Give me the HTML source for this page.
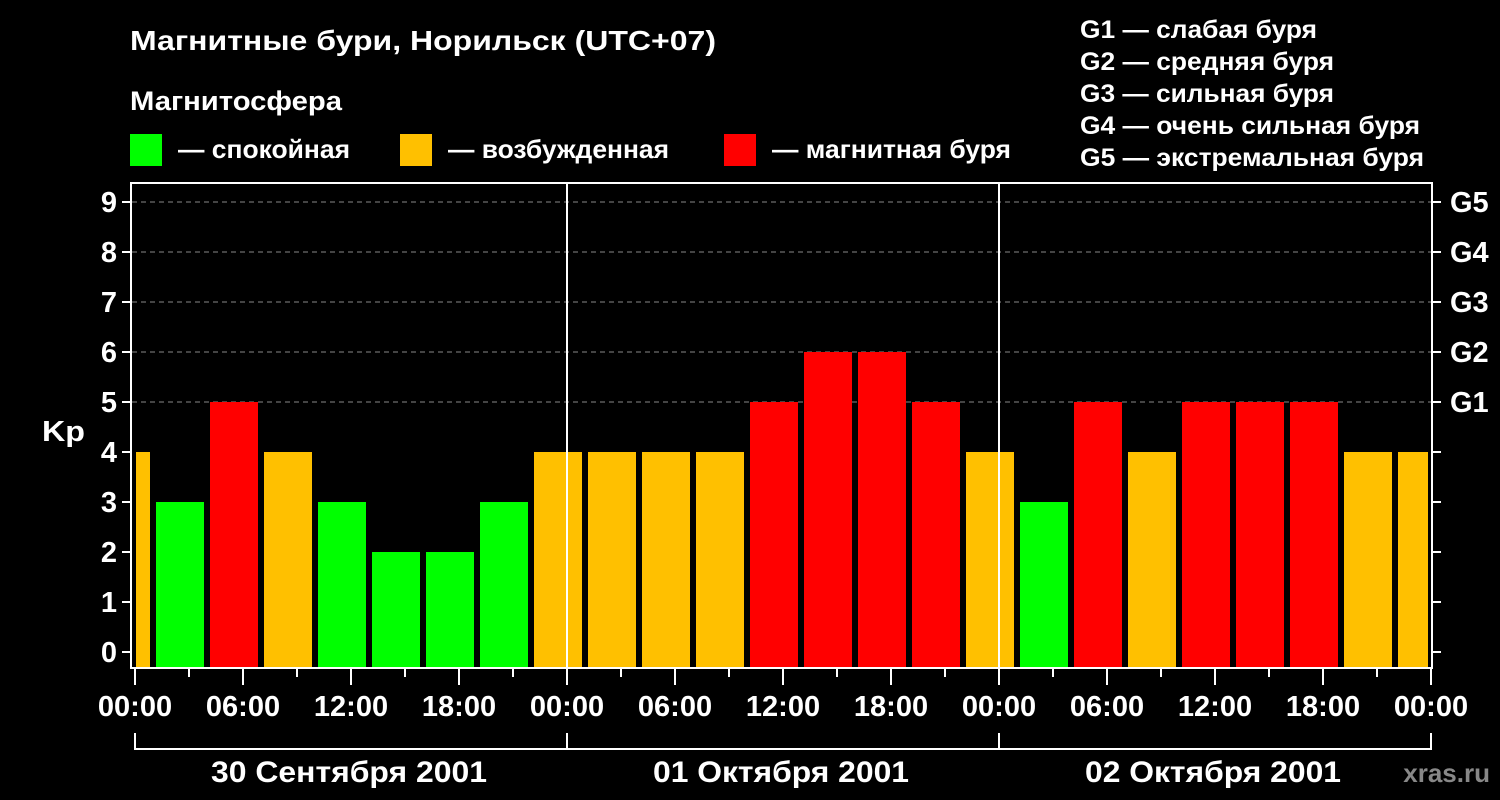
<!DOCTYPE html>
<html><head><meta charset="utf-8"><style>
html,body{margin:0;padding:0;background:#000;}
svg{display:block;font-family:"Liberation Sans",sans-serif;font-weight:bold;}
</style></head><body>
<svg width="1500" height="800" viewBox="0 0 1500 800" xmlns="http://www.w3.org/2000/svg">
<rect width="1500" height="800" fill="#000"/>
<g fill="#fff">
<text x="130" y="50" font-size="28" textLength="586" lengthAdjust="spacingAndGlyphs">Магнитные бури, Норильск (UTC+07)</text>
<text x="130" y="110" font-size="27" textLength="212" lengthAdjust="spacingAndGlyphs">Магнитосфера</text>
<text x="178" y="158" font-size="26" textLength="172" lengthAdjust="spacingAndGlyphs">— спокойная</text>
<text x="448" y="158" font-size="26" textLength="221" lengthAdjust="spacingAndGlyphs">— возбужденная</text>
<text x="772" y="158" font-size="26" textLength="239" lengthAdjust="spacingAndGlyphs">— магнитная буря</text>
<text x="1080" y="38" font-size="25" textLength="237" lengthAdjust="spacingAndGlyphs">G1 — слабая буря</text>
<text x="1080" y="70" font-size="25" textLength="254" lengthAdjust="spacingAndGlyphs">G2 — средняя буря</text>
<text x="1080" y="102" font-size="25" textLength="254" lengthAdjust="spacingAndGlyphs">G3 — сильная буря</text>
<text x="1080" y="134" font-size="25" textLength="340" lengthAdjust="spacingAndGlyphs">G4 — очень сильная буря</text>
<text x="1080" y="166" font-size="25" textLength="344" lengthAdjust="spacingAndGlyphs">G5 — экстремальная буря</text>
</g>
<rect x="130" y="134" width="32" height="32" fill="#00ff00"/>
<rect x="400" y="134" width="32" height="32" fill="#ffc000"/>
<rect x="724" y="134" width="32" height="32" fill="#ff0000"/>
<g stroke="#888" stroke-width="1" stroke-dasharray="5,4">
<line x1="132" y1="202" x2="1432" y2="202"/>
<line x1="132" y1="252" x2="1432" y2="252"/>
<line x1="132" y1="302" x2="1432" y2="302"/>
<line x1="132" y1="352" x2="1432" y2="352"/>
<line x1="132" y1="402" x2="1432" y2="402"/>
</g>
<g>
<rect x="136" y="452" width="14" height="215" fill="#ffc000"/>
<rect x="156" y="502" width="48" height="165" fill="#00ff00"/>
<rect x="210" y="402" width="48" height="265" fill="#ff0000"/>
<rect x="264" y="452" width="48" height="215" fill="#ffc000"/>
<rect x="318" y="502" width="48" height="165" fill="#00ff00"/>
<rect x="372" y="552" width="48" height="115" fill="#00ff00"/>
<rect x="426" y="552" width="48" height="115" fill="#00ff00"/>
<rect x="480" y="502" width="48" height="165" fill="#00ff00"/>
<rect x="534" y="452" width="48" height="215" fill="#ffc000"/>
<rect x="588" y="452" width="48" height="215" fill="#ffc000"/>
<rect x="642" y="452" width="48" height="215" fill="#ffc000"/>
<rect x="696" y="452" width="48" height="215" fill="#ffc000"/>
<rect x="750" y="402" width="48" height="265" fill="#ff0000"/>
<rect x="804" y="352" width="48" height="315" fill="#ff0000"/>
<rect x="858" y="352" width="48" height="315" fill="#ff0000"/>
<rect x="912" y="402" width="48" height="265" fill="#ff0000"/>
<rect x="966" y="452" width="48" height="215" fill="#ffc000"/>
<rect x="1020" y="502" width="48" height="165" fill="#00ff00"/>
<rect x="1074" y="402" width="48" height="265" fill="#ff0000"/>
<rect x="1128" y="452" width="48" height="215" fill="#ffc000"/>
<rect x="1182" y="402" width="48" height="265" fill="#ff0000"/>
<rect x="1236" y="402" width="48" height="265" fill="#ff0000"/>
<rect x="1290" y="402" width="48" height="265" fill="#ff0000"/>
<rect x="1344" y="452" width="48" height="215" fill="#ffc000"/>
<rect x="1398" y="452" width="30" height="215" fill="#ffc000"/>
</g>
<rect x="131" y="183" width="1301" height="485" fill="none" stroke="#fff" stroke-width="2"/>
<line x1="567" y1="183" x2="567" y2="668" stroke="#fff" stroke-width="2"/>
<line x1="999" y1="183" x2="999" y2="668" stroke="#fff" stroke-width="2"/>
<g stroke="#fff" stroke-width="2">
<line x1="122" y1="202" x2="131" y2="202"/><line x1="122" y1="252" x2="131" y2="252"/>
<line x1="122" y1="302" x2="131" y2="302"/><line x1="122" y1="352" x2="131" y2="352"/>
<line x1="122" y1="402" x2="131" y2="402"/><line x1="122" y1="452" x2="131" y2="452"/>
<line x1="122" y1="502" x2="131" y2="502"/><line x1="122" y1="552" x2="131" y2="552"/>
<line x1="122" y1="602" x2="131" y2="602"/><line x1="122" y1="652" x2="131" y2="652"/>
<line x1="1432" y1="202" x2="1441" y2="202"/><line x1="1432" y1="252" x2="1441" y2="252"/>
<line x1="1432" y1="302" x2="1441" y2="302"/><line x1="1432" y1="352" x2="1441" y2="352"/>
<line x1="1432" y1="402" x2="1441" y2="402"/><line x1="1432" y1="452" x2="1441" y2="452"/>
<line x1="1432" y1="502" x2="1441" y2="502"/><line x1="1432" y1="552" x2="1441" y2="552"/>
<line x1="1432" y1="602" x2="1441" y2="602"/><line x1="1432" y1="652" x2="1441" y2="652"/>
</g>
<g fill="#fff" font-size="29" text-anchor="end">
<text x="117" y="212">9</text><text x="117" y="262">8</text><text x="117" y="312">7</text>
<text x="117" y="362">6</text><text x="117" y="412">5</text><text x="117" y="462">4</text>
<text x="117" y="512">3</text><text x="117" y="562">2</text><text x="117" y="612">1</text>
<text x="117" y="662">0</text>
</g>
<text x="42" y="441" fill="#fff" font-size="29" textLength="43" lengthAdjust="spacingAndGlyphs">Kp</text>
<g fill="#fff" font-size="29">
<text x="1450" y="212">G5</text><text x="1450" y="262">G4</text><text x="1450" y="312">G3</text>
<text x="1450" y="362">G2</text><text x="1450" y="412">G1</text>
</g>
<g stroke="#fff" stroke-width="2">
<line x1="135" y1="668" x2="135" y2="685"/><line x1="189" y1="668" x2="189" y2="677"/>
<line x1="243" y1="668" x2="243" y2="685"/><line x1="297" y1="668" x2="297" y2="677"/>
<line x1="351" y1="668" x2="351" y2="685"/><line x1="405" y1="668" x2="405" y2="677"/>
<line x1="459" y1="668" x2="459" y2="685"/><line x1="513" y1="668" x2="513" y2="677"/>
<line x1="567" y1="668" x2="567" y2="685"/><line x1="621" y1="668" x2="621" y2="677"/>
<line x1="675" y1="668" x2="675" y2="685"/><line x1="729" y1="668" x2="729" y2="677"/>
<line x1="783" y1="668" x2="783" y2="685"/><line x1="837" y1="668" x2="837" y2="677"/>
<line x1="891" y1="668" x2="891" y2="685"/><line x1="945" y1="668" x2="945" y2="677"/>
<line x1="999" y1="668" x2="999" y2="685"/><line x1="1053" y1="668" x2="1053" y2="677"/>
<line x1="1107" y1="668" x2="1107" y2="685"/><line x1="1161" y1="668" x2="1161" y2="677"/>
<line x1="1215" y1="668" x2="1215" y2="685"/><line x1="1269" y1="668" x2="1269" y2="677"/>
<line x1="1323" y1="668" x2="1323" y2="685"/><line x1="1377" y1="668" x2="1377" y2="677"/>
<line x1="1431" y1="668" x2="1431" y2="685"/>
<polyline points="135,733 135,749 1431,749 1431,733" fill="none"/>
<line x1="567" y1="733" x2="567" y2="749"/><line x1="999" y1="733" x2="999" y2="749"/>
</g>
<g fill="#fff" font-size="29" text-anchor="middle">
<text x="135" y="716">00:00</text><text x="243" y="716">06:00</text><text x="351" y="716">12:00</text>
<text x="459" y="716">18:00</text><text x="567" y="716">00:00</text><text x="675" y="716">06:00</text>
<text x="783" y="716">12:00</text><text x="891" y="716">18:00</text><text x="999" y="716">00:00</text>
<text x="1107" y="716">06:00</text><text x="1215" y="716">12:00</text><text x="1323" y="716">18:00</text>
<text x="1431" y="716">00:00</text>
</g>
<g fill="#fff" font-size="30" text-anchor="middle">
<text x="349" y="782" textLength="276" lengthAdjust="spacingAndGlyphs">30 Сентября 2001</text>
<text x="781" y="782" textLength="256" lengthAdjust="spacingAndGlyphs">01 Октября 2001</text>
<text x="1213" y="782" textLength="256" lengthAdjust="spacingAndGlyphs">02 Октября 2001</text>
</g>
<text x="1490" y="782" fill="#888" font-size="26" text-anchor="end">xras.ru</text>
</svg>
</body></html>
